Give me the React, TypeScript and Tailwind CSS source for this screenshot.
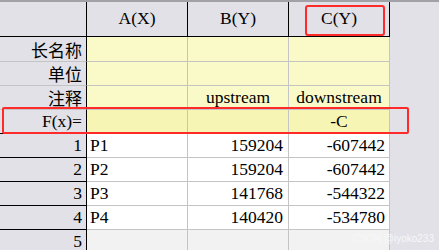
import React from "react";

type DataRow = { n: number; a: string; b: string; c: string };

const ROWS: DataRow[] = [
  { n: 1, a: "P1", b: "159204", c: "-607442" },
  { n: 2, a: "P2", b: "159204", c: "-607442" },
  { n: 3, a: "P3", b: "141768", c: "-544322" },
  { n: 4, a: "P4", b: "140420", c: "-534780" },
];

const LABELS: { name: string; b: string; c: string }[] = [
  { name: "长名称", b: "", c: "" },
  { name: "单位", b: "", c: "" },
  { name: "注释", b: "upstream", c: "downstream" },
];

const font = {
  fontFamily: '"Liberation Serif", "Noto Sans CJK SC", serif',
};

const App: React.FC = () => {
  return (
    <div
      className="relative w-[439px] h-[250px] overflow-hidden bg-[#e1e1e7] border-t-2 border-[#a2a2a6] text-black text-[17.5px] leading-none"
      style={font}
    >
      <div className="grid w-[390px] grid-cols-[87px_101px_101px_101px]">
        {/* column headers */}
        <div className="h-[35px] border-r border-b border-black" />
        {["A(X)", "B(Y)", "C(Y)"].map((h) => (
          <div
            key={h}
            className="h-[35px] flex items-center justify-center border-r border-b border-black"
          >
            {h}
          </div>
        ))}

        {/* label rows */}
        {LABELS.map((row, i) => (
          <React.Fragment key={row.name}>
            <div
              className={`${i === 0 ? "h-[25px]" : "h-[24px]"} flex items-center justify-end pr-[4px] border-r border-r-black border-b border-b-[#c4c4c4] text-[17px]`}
              style={{ fontFamily: '"Noto Sans CJK SC", sans-serif' }}
            >
              {row.name}
            </div>
            <div className="bg-[#fafac9] border-r border-b border-[#c4c4c4]" />
            <div className="bg-[#fafac9] border-r border-b border-[#c4c4c4] flex items-center justify-center">
              {row.b}
            </div>
            <div className="bg-[#fafac9] border-r border-b border-[#c4c4c4] flex items-center justify-center">
              {row.c}
            </div>
          </React.Fragment>
        ))}

        {/* formula row */}
        <div className="h-[24px] flex items-center justify-end pr-[4px] border-r border-r-black border-b border-b-black">
          F(x)=
        </div>
        <div className="bg-[#f7f5b4] border-r border-b border-[#c4c4c4]" />
        <div className="bg-[#f7f5b4] border-r border-b border-[#c4c4c4]" />
        <div className="bg-[#f7f5b4] border-r border-b border-[#c4c4c4] flex items-center justify-center">
          -C
        </div>

        {/* data rows */}
        {ROWS.map((r) => (
          <React.Fragment key={r.n}>
            <div className="h-[24px] flex items-center justify-end pr-[4px] border-r border-b border-black">
              {r.n}
            </div>
            <div className="bg-white border-r border-b border-[#c4c4c4] flex items-center pl-[3px]">
              {r.a}
            </div>
            <div className="bg-white border-r border-b border-[#c4c4c4] flex items-center justify-end pr-[5px]">
              {r.b}
            </div>
            <div className="bg-white border-r border-b border-[#c4c4c4] flex items-center justify-end pr-[4px]">
              {r.c}
            </div>
          </React.Fragment>
        ))}

        <div className="h-[24px] flex items-center justify-end pr-[4px] border-r border-b border-black">
          5
        </div>
        <div className="bg-[#f2f2f2] border-r border-b border-[#c4c4c4]" />
        <div className="bg-[#f2f2f2] border-r border-b border-[#c4c4c4]" />
        <div className="bg-[#f2f2f2] border-r border-b border-[#c4c4c4]" />
      </div>

      {/* highlight boxes */}
      <div className="absolute left-[305px] top-[3px] w-[80px] h-[31px] border-2 border-[#ff2a2a] rounded-[3px]" />
      <div className="absolute left-[2px] top-[105px] w-[407px] h-[27px] border-2 border-[#ff2a2a] rounded-[2px]" />

      <div
        className="absolute right-[5px] bottom-[6px] text-[10px] text-[#f7f7f9]"
        style={{ fontFamily: '"Liberation Sans", sans-serif' }}
      >
        CSDN @iyoko233
      </div>
    </div>
  );
};

export default App;
